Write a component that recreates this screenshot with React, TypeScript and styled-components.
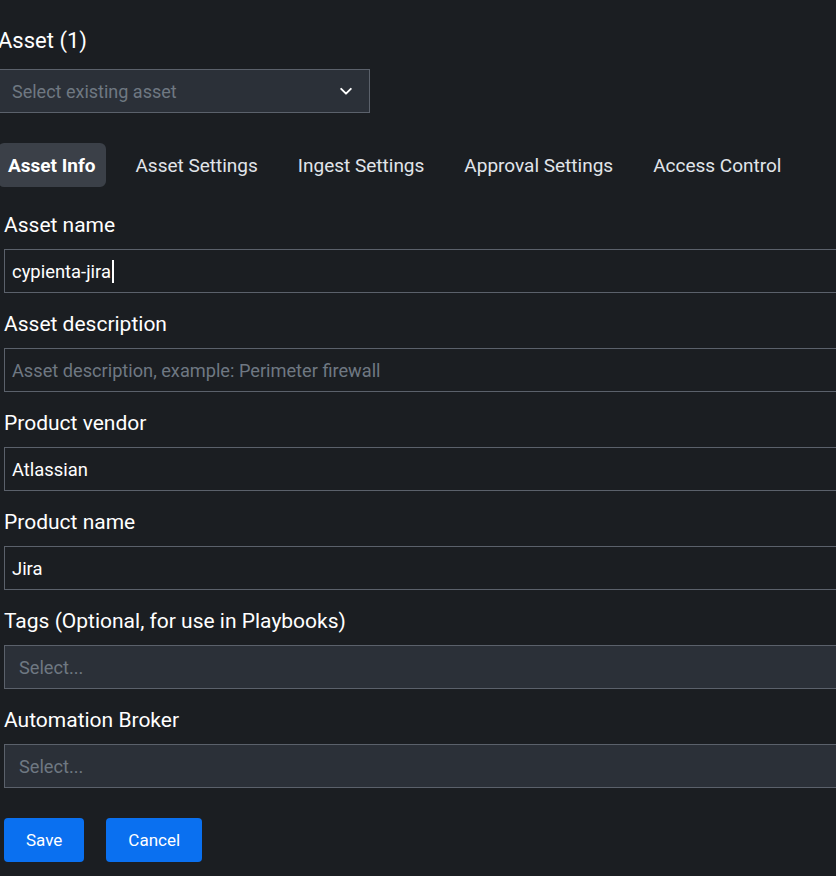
import React from 'react';
import styled, {createGlobalStyle} from 'styled-components';

const GlobalStyle = createGlobalStyle`
body {
  margin: 0;
  background-color: #1b1e22;
  font-family: Roboto, "Liberation Sans", Arial, sans-serif;
  overflow: hidden;
}
`;

const Page = styled.div`
margin-left: -2px;
padding-top: 27px;
width: 920px;
`;

const Title = styled.div`
font-size: 22px;
line-height: 28px;
font-weight: 400;
color: #ffffff;
`;

const AssetPicker = styled.div`
margin-top: 14px;
width: 372px;
height: 44px;
box-sizing: border-box;
display: flex;
align-items: center;
justify-content: space-between;
padding: 0 16px 0 13px;
background-color: #2b3038;
border: 1px solid #5b616b;
font-size: 18px;
color: #6f7882;
`;

const Tabs = styled.div`
margin-top: 30px;
display: flex;
gap: 19px;
`;

interface TabProps {
    readonly active?: boolean;
}

const Tab = styled.div<TabProps>`
height: 44px;
display: flex;
align-items: center;
padding: 0 11px 0 10px;
border-radius: 6px;
font-size: 19px;
font-weight: ${(props) => props.active ? 700 : 400};
color: ${(props) => props.active ? '#ffffff' : '#e1e5ea'};
background-color: ${(props) => props.active ? '#3b4048' : 'transparent'};
`;

const Form = styled.div`
margin-top: 7px;
padding-left: 6px;
display: flex;
flex-direction: column;
`;

const Label = styled.div`
margin-top: 18px;
margin-bottom: 11px;
font-size: 21px;
line-height: 26px;
font-weight: 400;
color: #ffffff;
`;

interface BoxProps {
    readonly filled?: boolean;
}

const Box = styled.div<BoxProps>`
height: 44px;
box-sizing: border-box;
display: flex;
align-items: center;
padding: ${(props) => props.filled ? '0 14px' : '0 7px'};
background-color: ${(props) => props.filled ? '#2b3038' : 'transparent'};
border: 1px solid #5b616b;
font-size: 18.2px;
`;

const Value = styled.span`
color: #ffffff;
font-size: 18.4px;
`;

const Placeholder = styled.span`
color: #6f7882;
`;

const Caret = styled.span`
display: inline-block;
width: 2px;
height: 23px;
background-color: #ffffff;
margin-left: 1px;
`;

const Buttons = styled.div`
margin-top: 30px;
display: flex;
gap: 22px;
`;

const Button = styled.button`
height: 44px;
padding: 0 22px;
border: none;
border-radius: 4px;
background-color: #0a70f0;
color: #ffffff;
font-family: inherit;
font-size: 17px;
font-weight: 400;
`;

const Chevron = () => (
    <svg width="14" height="14" viewBox="0 0 16 16" fill="none">
        <path d="M2.5 5.5 8 11l5.5-5.5" stroke="#ffffff" strokeWidth="2.2" strokeLinecap="round" strokeLinejoin="round"/>
    </svg>
);

const tabs = ['Asset Info', 'Asset Settings', 'Ingest Settings', 'Approval Settings', 'Access Control'];

interface FieldProps {
    label: string;
    value?: string;
    placeholder?: string;
    select?: boolean;
    focused?: boolean;
}

const Field = ({label, value, placeholder, select, focused}: FieldProps) => (
    <>
        <Label>{label}</Label>
        <Box filled={select}>
            {value ? <Value>{value}</Value> : <Placeholder>{placeholder}</Placeholder>}
            {focused && <Caret/>}
        </Box>
    </>
);

const App = () => {
    return (
        <Page>
            <GlobalStyle/>
            <Title>Asset (1)</Title>
            <AssetPicker>
                <span>Select existing asset</span>
                <Chevron/>
            </AssetPicker>
            <Tabs>
                {tabs.map((t, i) => (
                    <Tab key={t} active={i === 0}>{t}</Tab>
                ))}
            </Tabs>
            <Form>
                <Field label='Asset name' value='cypienta-jira' focused/>
                <Field label='Asset description' placeholder='Asset description, example: Perimeter firewall'/>
                <Field label='Product vendor' value='Atlassian'/>
                <Field label='Product name' value='Jira'/>
                <Field label='Tags (Optional, for use in Playbooks)' placeholder='Select...' select/>
                <Field label='Automation Broker' placeholder='Select...' select/>
                <Buttons>
                    <Button>Save</Button>
                    <Button>Cancel</Button>
                </Buttons>
            </Form>
        </Page>
    );
};

export default App;
